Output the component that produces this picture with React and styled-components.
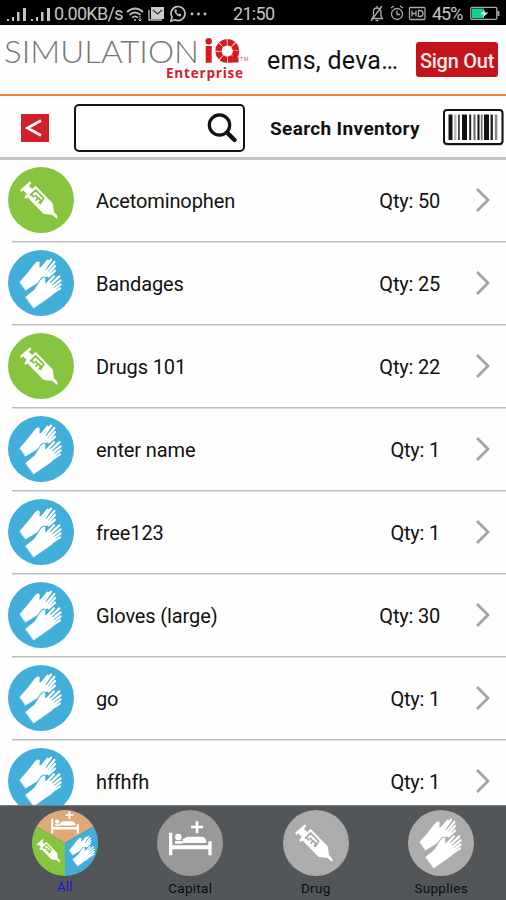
import React from "react";
import styled, { createGlobalStyle } from "styled-components";

const GlobalStyle = createGlobalStyle`
  * { box-sizing: border-box; }
  body { margin: 0; background: #fff; font-family: Roboto, "Liberation Sans", sans-serif; color: #111; }
`;

const Screen = styled.div`
  width: 506px;
  height: 900px;
  display: flex;
  flex-direction: column;
  overflow: hidden;
  background: #fefefe;
`;

const StatusBar = styled.div`
  flex: none;
  height: 25px;
  padding: 2px 5px 0 7px;
  display: flex;
  align-items: center;
  background: #000;
  color: #c4c4c4;
  font-size: 18px;
  line-height: 23px;
  white-space: nowrap;
  svg { display: block; flex: none; }
`;

const StatusGroup = styled.div`
  display: flex;
  align-items: center;
  width: ${(p) => p.$width}px;
`;

const IconGroup = styled.div`
  display: flex;
  align-items: center;
  gap: ${(p) => p.$gap}px;
`;

const StatusText = styled.span`
  width: ${(p) => p.$width}px;
  margin-left: ${(p) => p.$left || 0}px;
  letter-spacing: ${(p) => p.$spacing || 0}px;
`;

const Header = styled.header`
  flex: none;
  height: 71px;
  display: flex;
  align-items: flex-start;
  border-bottom: 2px solid #f58233;
`;

const Brand = styled.div`
  flex: none;
  width: 256px;
  height: 66px;
  padding: 13px 0 0 4px;
`;

const BrandArt = styled.svg`
  display: block;
  width: 252px;
  height: 27px;
  overflow: visible;
`;

const BrandSub = styled.div`
  margin: 0 0 0 162px;
  height: 16px;
  font: 700 13.5px/16px "Open Sans", sans-serif;
  letter-spacing: 0.8px;
  color: #d2202b;
  white-space: nowrap;
`;

const UserName = styled.div`
  width: 150px;
  padding: 21px 0 0 11px;
  font-size: 25px;
  line-height: 30px;
  letter-spacing: 0.25px;
  white-space: nowrap;
`;

const SignOut = styled.button`
  margin: 17px 0 0 10px;
  width: 82px;
  height: 35px;
  padding: 3px 0 0;
  border: 0;
  border-radius: 3px;
  background: #c3141b;
  color: #fbe9e9;
  font: 500 20px/32px Roboto, sans-serif;
  letter-spacing: -0.25px;
  white-space: nowrap;
`;

const SearchBar = styled.div`
  flex: none;
  height: 64px;
  padding: 0 2px 0 21px;
  display: flex;
  align-items: center;
  border-bottom: 3px solid #c3c3c3;
`;

const BackButton = styled.button`
  width: 28px;
  height: 28px;
  padding: 0;
  border: 0;
  margin-top: 2px;
  background: #d21f2b;
  svg { display: block; }
`;

const SearchField = styled.div`
  width: 171px;
  height: 48px;
  margin: 2px 0 0 25px;
  padding-right: 6px;
  display: flex;
  align-items: center;
  justify-content: flex-end;
  border: 2px solid #111;
  border-radius: 5px;
  background: #fff;
`;

const SearchLabel = styled.div`
  flex: 1;
  padding: 4px 0 0 25px;
  font-size: 19px;
  font-weight: 700;
  letter-spacing: 0.35px;
  white-space: nowrap;
`;

const Barcode = styled.svg`
  display: block;
  flex: none;
`;

const List = styled.main`
  flex: 1;
  min-height: 0;
  overflow: hidden;
`;

const Row = styled.div`
  height: 82.95px;
  padding: 0 0 2px 8px;
  display: flex;
  align-items: center;
  font-size: 20px;
  background: linear-gradient(#bebebe, #bebebe) 12px 100% / 100% 1.5px no-repeat;
`;

const ItemName = styled.div`
  flex: 1;
  padding: 1px 0 0 22px;
  letter-spacing: -0.12px;
`;

const Quantity = styled.div`
  padding-top: 1px;
  letter-spacing: -0.2px;
  white-space: pre;
`;

const Chevron = styled.svg`
  display: block;
  margin: 0 14px 0 34px;
`;

const Disc = styled.svg`
  display: block;
  flex: none;
  width: 66px;
  height: 66px;
`;

const TabBar = styled.nav`
  flex: none;
  height: 95px;
  padding: 4px 2px 0 2px;
  display: grid;
  grid-template-columns: repeat(4, 1fr);
  background: #535659;
  border-top: 1px solid #7b7d80;
`;

const Tab = styled.div`
  display: flex;
  flex-direction: column;
  align-items: center;
`;

const TabLabel = styled.span`
  margin-top: ${(p) => (p.$active ? 3 : 4)}px;
  font-size: ${(p) => (p.$active ? 13 : 13.5)}px;
  line-height: 16px;
  letter-spacing: 0.3px;
  color: ${(p) => (p.$active ? "#1714e0" : "#0b0b0b")};
`;

/* Glyphs share a 198-unit square. */
const Gloves = ({ bg }) => (
  <g stroke="#fff" strokeLinecap="round" strokeLinejoin="round" fill="#fff">
    <path d="M36 96 L62 66 L82 40 Q89 32 94 37 L93 54 L104 51 L126 72 L105 88 L76 106 L53 120 Z" strokeWidth="2" />
    <path d="M99 57 L119 32 M105 63 L129 29 M112 69 L139 36 M117 75 L141 48 M122 79 L141 62" strokeWidth="6.8" fill="none" />
    <path d="M53 141 L80 119 L98 91 Q105 80 111 84 L111 101 L124 96 L143 121 L132 136 L77 174 Z" stroke={bg} strokeWidth="7" />
    <path d="M53 141 L80 119 L98 91 Q105 80 111 84 L111 101 L124 96 L143 121 L132 136 L77 174 Z" strokeWidth="1.5" />
    <path d="M117 101 L138 79 M123 108 L154 79 M129 114 L158 91 M134 121 L158 103 M136 128 L156 115" strokeWidth="6.8" fill="none" />
  </g>
);

const Syringe = ({ bg }) => (
  <g fill="#fff">
    <path d="M36 69 L66 43 L70 48 L63 57 L73 66 L83 56 L87 61 L134 109 L138 135 L147 145 L149 155 L144 153 L132 143 L107 141 L58 91 L54 96 L49 91 L56 80 L45 70 L40 75 Z" />
    <path d="M66 86 L83 69 L108 95 M70 82 L79 91 M81 84 L90 93 L83 101 M91 93 L99 101 L92 109 M107 94 L96 111" fill="none" stroke={bg} strokeWidth="5.5" />
  </g>
);

const Bed = () => (
  <g fill="#fff">
    <path d="M36 68 H46 V106 H154 V94 H164 V136 H154 V118 H46 V136 H36 Z" />
    <circle cx="64" cy="81" r="10" />
    <path d="M54 93 H76 V101 H54 Z M77 88 L91 80 H136 Q148 82 148 99 H77 Z" />
    <path d="M116 34 H124 V47 H138 V55 H124 V70 H116 V55 H102 V47 H116 Z" />
  </g>
);

const discFill = { drug: "#87c540", supply: "#42afdb", capital: "#999", greyDrug: "#acacac", greySupply: "#acacac" };
const discGlyph = { drug: Syringe, supply: Gloves, capital: Bed, greyDrug: Syringe, greySupply: Gloves };

const IconDisc = ({ kind }) => {
  const Glyph = discGlyph[kind];
  return (
    <Disc viewBox="0 0 198 198">
      <circle cx="99" cy="99" r="99" fill={discFill[kind]} />
      <Glyph bg={discFill[kind]} />
    </Disc>
  );
};

const AllDisc = () => (
  <Disc viewBox="0 0 198 198">
    <path d="M99 99 L13.3 49.5 A99 99 0 0 1 184.7 49.5 Z" fill="#dea878" />
    <path d="M99 99 L184.7 49.5 A99 99 0 0 1 99 198 Z" fill="#42afdb" />
    <path d="M99 99 L99 198 A99 99 0 0 1 13.3 49.5 Z" fill="#87c540" />
    <g transform="translate(34 -18) scale(0.65)"><Bed /></g>
    <g transform="translate(-9 60) scale(0.63)"><Syringe bg="#87c540" /></g>
    <g transform="translate(90 62) scale(0.61)"><Gloves bg="#42afdb" /></g>
  </Disc>
);

const Signal = () => (
  <svg width="20" height="16" viewBox="0 0 20 16" fill="#c4c4c4">
    <path d="M0 13h2v2H0zM5 11h2v4H5zM10 6h2.5v9H10zM16 2h3v13h-3z" />
  </svg>
);

const WifiIcon = () => (
  <svg width="18" height="16" viewBox="0 0 18 16" fill="none" stroke="#bbb" strokeWidth="1.7">
    <path d="M1 6 Q9 -1 17 6 M3.5 9 Q9 4 14.5 9 M6 11.7 Q9 9 12 11.7" />
    <circle cx="9" cy="14" r="1" fill="#bbb" stroke="none" />
    <path d="M14 10v5M12.5 13.5l1.5 1.5 1.5-1.5" strokeWidth="1" />
  </svg>
);

const MailIcon = () => (
  <svg width="17" height="16" viewBox="0 0 17 16">
    <path d="M1 4v10h13" fill="none" stroke="#bbb" strokeWidth="1.4" />
    <path d="M3 1h13v12H3z" fill="#ccc" />
    <path d="M5 4l4.5 4L14 4" fill="none" stroke="#333" strokeWidth="1.3" />
  </svg>
);

const WhatsIcon = () => (
  <svg width="17" height="17" viewBox="0 0 17 17">
    <path d="M2 16l1-4A7 7 0 1 1 6 14.8Z" fill="none" stroke="#c4c4c4" strokeWidth="1.7" />
    <path d="M6 4.5c-2 2 2.5 7.5 5.5 7l.8-2-2-1-1 1-2.2-2.4.9-1-.8-1.8Z" fill="#c4c4c4" />
  </svg>
);

const MoreDots = () => (
  <svg width="17" height="4" viewBox="0 0 17 4" fill="#c4c4c4">
    <circle cx="2" cy="2" r="1.4" /><circle cx="8.5" cy="2" r="1.4" /><circle cx="15" cy="2" r="1.4" />
  </svg>
);

const StatusRight = () => (
  <svg width="56" height="17" viewBox="0 0 56 17" fill="none" stroke="#aaa" strokeWidth="1.3">
    <path d="M2 13.5h10.5L11 11V7Q11 3 7 3T3.5 7v4ZM5.5 15.5h3M1 16L12 1M7 1v2" />
    <circle cx="27" cy="9" r="5.5" /><path d="M27 5.5V9.5h3M21 3l3-2M33 3l-3-2" />
    <rect x="39.5" y="2.5" width="15.5" height="12" rx="1" />
    <path d="M42 5.5v6M46 5.5v6M42 8.5h4M48.5 5.5h1.5q3 0 3 3t-3 3h-1.5Z" />
  </svg>
);

const BatteryIcon = () => (
  <svg width="30" height="15" viewBox="0 0 30 15">
    <rect x="0.8" y="1.3" width="26" height="12" rx="1.2" fill="#000" stroke="#aaa" strokeWidth="1.3" />
    <path d="M2 2.5h12v9.7H2z" fill="#13cf87" />
    <path d="M15.5 4L10 8.2h4L12.5 11.5l6-5h-4Z" fill="#eee" />
    <path d="M28.4 5v5" stroke="#aaa" strokeWidth="2" />
  </svg>
);

const Logo = () => (
  <Brand>
    <BrandArt viewBox="4 38 252 27">
      <text x="4" y="62.7" fontFamily="Lato, sans-serif" fontWeight="300" fontSize="32.3" textLength="195" lengthAdjust="spacingAndGlyphs" fill="#777">SIMULATION</text>
      <g fill="none" stroke="#d71920">
        <path d="M208.7 46v16.7" strokeWidth="6" />
        <circle cx="227.3" cy="51" r="8.8" strokeWidth="6.4" strokeDasharray="6.1 0.81" />
        <path d="M229 60h9.5M235 55v7" strokeWidth="5" />
      </g>
      <circle cx="208.7" cy="41.3" r="3.2" fill="#d71920" />
      <text x="240" y="61.3" fontFamily="Roboto, sans-serif" fontSize="5.5" fill="#d7656a" textLength="8.5">TM</text>
    </BrandArt>
    <BrandSub>Enterprise</BrandSub>
  </Brand>
);

const items = [
  ["drug", "Acetominophen", 50],
  ["supply", "Bandages", 25],
  ["drug", "Drugs 101", 22],
  ["supply", "enter name", 1],
  ["supply", "free123", 1],
  ["supply", "Gloves (large)", 30],
  ["supply", "go", 1],
  ["supply", "hffhfh", 1],
];

const tabs = [
  ["Capital", "capital"],
  ["Drug", "greyDrug"],
  ["Supplies", "greySupply"],
];

const bars = [[448.5, 4, "#111"], [454, 2.5, "#bbb"], [458.2, 1.5, "#222"], [462, 5, "#111"], [469.2, 2, "#222"], [473.5, 2, "#666"], [477.5, 2, "#111"], [480.8, 1.8, "#777"], [484, 5, "#111"], [490.5, 2.4, "#222"], [494.8, 2.5, "#888"]];

export default function App() {
  return (
    <Screen>
      <GlobalStyle />
      <StatusBar>
        <StatusGroup $width={226}>
          <IconGroup $gap={4}>
            <Signal />
            <Signal />
          </IconGroup>
          <StatusText $width={72} $left={3} $spacing={-0.7}>0.00KB/s</StatusText>
          <IconGroup $gap={4}>
            <WifiIcon />
            <MailIcon />
            <WhatsIcon />
            <MoreDots />
          </IconGroup>
        </StatusGroup>
        <StatusText $width={137} $spacing={-0.7}>21:50</StatusText>
        <StatusRight />
        <StatusText $width={38} $left={6} $spacing={-1}>45%</StatusText>
        <BatteryIcon />
      </StatusBar>
      <Header>
        <Logo />
        <UserName>ems, deva…</UserName>
        <SignOut>Sign Out</SignOut>
      </Header>
      <SearchBar>
        <BackButton aria-label="Back">
          <svg width="28" height="28" viewBox="0 0 28 28" fill="none" stroke="#fff" strokeWidth="2.7">
            <path d="M20 6.5L6.5 14L20 21.5" />
          </svg>
        </BackButton>
        <SearchField>
          <svg width="30" height="30" viewBox="0 0 30 30" fill="none" stroke="#111">
            <circle cx="12.5" cy="12" r="10.2" strokeWidth="3.2" />
            <path d="M20 19.5L27.5 27" strokeWidth="4.4" strokeLinecap="round" />
          </svg>
        </SearchField>
        <SearchLabel>Search Inventory</SearchLabel>
        <Barcode width="62" height="38" viewBox="442 108 62 38">
          <rect x="444.5" y="110.8" width="58" height="34" rx="3" fill="none" stroke="#999" strokeWidth="1.5" />
          <rect x="444" y="110" width="58.5" height="34" rx="3" fill="#fff" stroke="#111" strokeWidth="2" />
          {bars.map(([x, w, c]) => <rect key={x} x={x} y="114.5" width={w} height="25.5" fill={c} />)}
        </Barcode>
      </SearchBar>
      <List>
        {items.map(([kind, name, qty]) => (
          <Row key={name}>
            <IconDisc kind={kind} />
            <ItemName>{name}</ItemName>
            <Quantity>Qty: {qty}</Quantity>
            <Chevron width="18" height="26" viewBox="0 0 18 26" fill="none" stroke="#a3a3a3" strokeWidth="2.8">
              <path d="M3 2L14 13L3 24" />
            </Chevron>
          </Row>
        ))}
      </List>
      <TabBar>
        <Tab>
          <AllDisc />
          <TabLabel $active>All</TabLabel>
        </Tab>
        {tabs.map(([label, kind]) => (
          <Tab key={label}>
            <IconDisc kind={kind} />
            <TabLabel>{label}</TabLabel>
          </Tab>
        ))}
      </TabBar>
    </Screen>
  );
}
